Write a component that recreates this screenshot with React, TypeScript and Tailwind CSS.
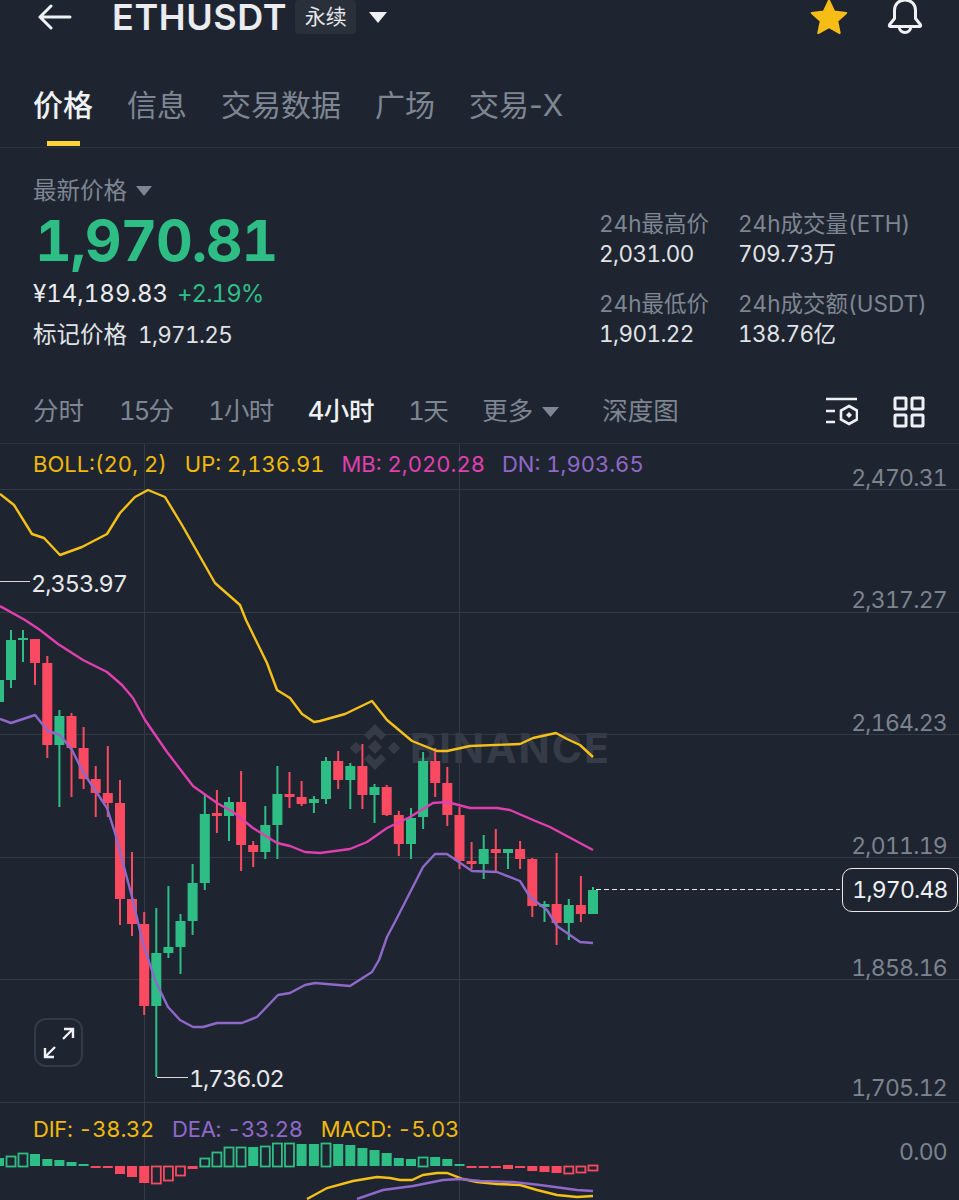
import React from "react";

type C = [number, number, number, number, number, number];
// x, wickTop, bodyTop, bodyBottom, wickBottom, up(1)/down(0)
const candles: C[] = [
  [-1,630,680,702,705,1],[11,630,640,680,688,1],[23,630,638,640,662,1],[35,639,639,663,685,0],[47.3,656,663,745,758,0],
  [59.4,710,716,745,807,1],[71.5,713,716,748,797,0],[83.6,727,748,779,789,0],[95.7,766,779,793,817,0],[107.8,746,793,803,817,0],
  [120,780,803,899,925,0],[132,852,899,924,936,0],[144.2,912,924,1006,1015,0],[156.3,908,953,1006,1077,1],[168.4,886,947,953,958,1],
  [180.5,914,921,947,974,1],[192.6,864,883,921,935,1],[204.8,795,814,883,890,1],[216.9,790,813,816,833,0],[229,797,802,816,841,1],
  [241.1,771,802,845,871,0],[253.2,841,845,852,867,0],[265.3,806,825,852,859,1],[277.4,766,794,825,859,1],[289.5,772,794,797,808,0],
  [301.6,781,797,804,806,0],[313.9,796,799,803,813,1],[326,757,761,799,804,1],[338.2,751,761,780,789,0],[350.3,763,766,780,809,1],
  [362.4,744,766,795,809,0],[374.5,784,787,795,823,1],[386.7,785,787,815,816,0],[398.8,811,815,844,856,0],[411,808,818,844,859,1],
  [423.1,752,761,817,829,1],[435.2,748,761,783,797,0],[447.3,767,783,815,826,0],[459.5,807,815,861,869,0],[471.6,842,861,864,869,0],
  [483.7,835,849,864,879,1],[495.8,829,849,853,871,0],[508,849,849,853,869,1],[520.1,841,849,859,869,0],[532.3,858,859,906,917,0],
  [544.5,901,904,907,922,1],[556.6,853,904,923,945,0],[568.8,899,905,923,940,1],[580.9,876,905,914,922,0],[593,887,890,914,914,1],
];

// x, top, bottom, hollow, up
const bars: [number, number, number, number, number][] = [
  [-1,1158,1166,0,1],[11,1156,1166,1,1],[23,1153,1166,1,1],[35,1154,1166,0,1],[47.3,1159,1166,0,1],[59.4,1160,1166,0,1],[71.5,1162,1166,0,1],[83.6,1164,1166,0,1],
  [95.7,1166,1168,0,0],[107.8,1166,1168,0,0],[120,1166,1174,0,0],[132,1166,1177,0,0],[144.2,1166,1183,0,0],[156.3,1166,1183,1,0],[168.4,1166,1180,1,0],[180.5,1166,1175,1,0],[192.6,1166,1169,0,0],
  [204.8,1158,1166,1,1],[216.9,1152,1166,1,1],[229,1147,1166,1,1],[241.1,1147,1166,1,1],[253.2,1147,1166,0,1],[265.3,1146,1166,1,1],[277.4,1143,1166,1,1],[289.5,1143,1166,1,1],[301.6,1144,1166,0,1],
  [313.9,1144,1166,0,1],[326,1143,1166,1,1],[338.2,1144,1166,0,1],[350.3,1145,1166,0,1],[362.4,1148,1166,0,1],[374.5,1150,1166,0,1],[386.7,1153,1166,0,1],[398.8,1158,1166,0,1],[411,1159,1166,0,1],[423.1,1157,1166,1,1],[435.2,1157,1166,0,1],[447.3,1159,1166,0,1],[459.5,1164,1166,0,1],
  [471.6,1166,1168,0,0],[483.7,1166,1168,0,0],[495.8,1166,1168,0,0],[508,1165,1169,0,0],[520.1,1166,1168,0,0],[532.3,1166,1171,0,0],[544.5,1166,1172,0,0],[556.6,1166,1173,0,0],[568.8,1166,1173,1,0],[580.9,1166,1172,1,0],[593,1165,1170,1,0],
];

const bollUp = "0,494 14,505 32,534 44,538 60,555 82,547 107,534 120,513 135,497 148,490 165,497 182,525 215,583 240,605 246,620 267,663 277,690 290,698 302,714 314,722 320,721 345,714 372,701 387,720 412,741 437,751 447,751 470,746 520,744 533,738 556,733 567,739 580,745 593,757";
const bollMid = "0,606 25,620 40,630 58,644 83,660 107,672 122,685 133,698 145,720 167,752 193,786 217,803 233,812 253,828 277,843 290,846 305,852 320,853 350,849 367,842 387,828 410,817 433,803 447,802 470,808 497,808 510,810 533,820 550,827 593,850";
const bollLow = "0,719 11,723 35,715 48,731 60,735 72,750 83,772 107,808 115,833 132,897 143,943 155,980 168,1007 180,1020 193,1027 203,1027 217,1023 242,1023 257,1017 278,995 290,993 305,985 315,983 350,986 372,972 379,960 387,937 397,918 423,867 435,854 447,854 472,871 497,872 520,881 530,897 547,910 557,926 580,942 593,943";
const dif = "307,1199 327,1188 353,1181 377,1177 390,1178 400,1180 412,1180 423,1175 437,1173 447,1173 463,1179 477,1182 497,1184 520,1185 537,1190 557,1195 577,1197 593,1196";
const dea = "357,1199 383,1190 413,1186 443,1180 460,1179 480,1181 513,1182 540,1185 577,1190 593,1191";

const RED = "#f94a62";
const GREEN = "#2ebd85";

function Chart() {
  return (
    <svg width="959" height="756" viewBox="0 444 959 756" className="block relative">
      {[489, 612, 734, 857, 979, 1102].map((y) => (
        <line key={y} x1="0" x2="959" y1={y + 0.5} y2={y + 0.5} stroke="#343a45" />
      ))}
      {[144, 459].map((x) => (
        <line key={x} x1={x + 0.5} x2={x + 0.5} y1="443" y2="1200" stroke="#343a45" />
      ))}
      {/* watermark logo */}
      <g fill="#363c47">
        <path d="M375 724l11 11-5 5-6-6-6 6-5-5z" />
        <path d="M375 770l-11-11 5-5 6 6 6-6 5 5z" />
        <rect x="351.5" y="743.5" width="9" height="9" transform="rotate(45 356 748)" />
        <rect x="389.5" y="743.5" width="9" height="9" transform="rotate(45 394 748)" />
        <rect x="370" y="742" width="10" height="10" transform="rotate(45 375 747)" />
      </g>
      {candles.map(([x, wt, bt, bb, wb, up], i) => {
        const c = up ? GREEN : RED;
        return (
          <g key={i} fill={c}>
            <rect x={x - 1} y={wt} width="2" height={wb - wt} />
            <rect x={x - 5} y={bt} width="10" height={Math.max(bb - bt, 2)} />
          </g>
        );
      })}
      <polyline points={bollUp} fill="none" stroke="#f5c018" strokeWidth="2.4" strokeLinejoin="round" />
      <polyline points={bollMid} fill="none" stroke="#e03fb0" strokeWidth="2.4" strokeLinejoin="round" />
      <polyline points={bollLow} fill="none" stroke="#8f69c9" strokeWidth="2.4" strokeLinejoin="round" />
      <line x1="0" x2="30" y1="581.5" y2="581.5" stroke="#d5d8dd" />
      <polyline points="157,1077.5 188,1077.5" fill="none" stroke="#d5d8dd" />
      <line x1="596" x2="840" y1="889.5" y2="889.5" stroke="#e6e8ea" strokeDasharray="5 3" />
      {bars.map(([x, t, b, h, up], i) => {
        const c = up ? GREEN : RED;
        return h ? (
          <rect key={i} x={x - 4.5} y={t + 0.5} width="9" height={b - t} fill="none" stroke={c} strokeWidth="1.8" />
        ) : (
          <rect key={i} x={x - 5} y={t} width="10" height={b - t} fill={c} />
        );
      })}
      <polyline points={dif} fill="none" stroke="#f5c018" strokeWidth="2.4" />
      <polyline points={dea} fill="none" stroke="#8f69c9" strokeWidth="2.4" />
    </svg>
  );
}

function Axis({ y, children }: { y: string; children: React.ReactNode }) {
  return (
    <div className={`absolute right-[12px] leading-[28px] text-[23px] tracking-[-0.75px] text-[#7c838f] ${y}`}>{children}</div>
  );
}

export default function App() {
  const font = "font-['Inter','Noto_Sans_CJK_SC',sans-serif]";
  return (
    <div className={`w-[959px] h-[1200px] overflow-hidden flex flex-col bg-[#1f2530] tabular-nums ${font}`}>
      {/* header */}
      <div className="h-[34px] flex items-center pl-[38px] pr-[36px] shrink-0">
        <svg width="34" height="26" viewBox="0 0 34 26" fill="none" stroke="#eef0f3" strokeWidth="3" strokeLinecap="round" strokeLinejoin="round">
          <path d="M32 13H2M13 2L2 13l11 11" />
        </svg>
        <span className="ml-[40px] text-[36px] leading-[34px] font-semibold text-[#eaecef] tracking-[0.6px]">ETHUSDT</span>
        <span className="ml-[8px] h-[34px] w-[61px] flex items-center justify-center rounded-[4px] bg-[#2a303a] text-[21px] text-[#e5e7ea]">永续</span>
        <svg className="ml-[12px]" width="20" height="13" viewBox="0 0 20 13" fill="#eef0f3"><path d="M1 1h18l-9 11z" /></svg>
        <svg className="ml-auto" width="38" height="36" viewBox="0 0 38 36" fill="#f6bd16" stroke="#f6bd16" strokeWidth="2" strokeLinejoin="round">
          <path d="M19 1.500l5.200 11 12 1.400-8.900 8.200 2.400 11.900L19 28.100 8.300 34l2.400-11.900L1.800 13.900l12-1.400z" />
        </svg>
        <svg className="ml-[39px]" width="36" height="36" viewBox="0 0 36 36" fill="none" stroke="#eef0f3" strokeWidth="3" strokeLinejoin="round" strokeLinecap="round">
          <path d="M18 1c-6.500 0-10.500 4.500-10.500 10.500v8L2.500 25.800c-.4.800 0 1.700 1 1.700h29c1 0 1.400-.9 1-1.700l-5-6.300v-8C28.500 5.500 24.500 1 18 1z" />
          <path d="M12 28c.8 3.500 3 5.500 6 5.500s5.200-2 6-5.500" />
        </svg>
      </div>

      {/* tabs */}
      <div className="h-[114px] shrink-0 flex items-start gap-[34px] pl-[33px] border-b border-[#2d333e] text-[30px] leading-[40px] text-[#7e8693]">
        <div className="pt-[51px] flex flex-col items-center text-[#eef0f3] font-medium">
          价格
          <div className="mt-[16px] w-[33px] h-[5px] bg-[#fcd535]" />
        </div>
        <div className="pt-[51px]">信息</div>
        <div className="pt-[51px]">交易数据</div>
        <div className="pt-[51px]">广场</div>
        <div className="pt-[51px] normal-nums">交易-X</div>
      </div>

      {/* summary */}
      <div className="h-[239px] shrink-0 flex">
        <div className="w-[599px] pl-[33px] pt-[28px]">
          <div className="flex items-center h-[30px] text-[23.5px] text-[#7e8693]">
            最新价格
            <svg className="ml-[9px]" width="16" height="10" viewBox="0 0 16 10" fill="#7e8693"><path d="M0 0h16l-8 10z" /></svg>
          </div>
          <div className="mt-[5px] h-[60px] leading-[60px] text-[57px] font-bold text-[#2ebd85] ml-[2px] tracking-[-1.2px]">1,970.81</div>
          <div className="mt-[8px] h-[30px] leading-[30px] text-[24px] flex">
            <span className="text-[#eaecef]">¥14,189.83</span>
            <span className="ml-[9px] text-[#2ebd85] tracking-[-1px]">+2.19%</span>
          </div>
          <div className="mt-[11px] h-[30px] leading-[30px] flex items-center text-[#e0e3e7]">
            <span className="text-[23.5px]">标记价格</span>
            <span className="ml-[11px] text-[22.5px] tracking-[-0.7px]">1,971.25</span>
          </div>
        </div>
        <div className="pt-[61px] text-[22.5px] leading-[30px]">
          <div className="flex">
            <div className="w-[139px]">
              <div className="text-[#7e8693]">24h最高价</div>
              <div className="text-[#e0e3e7] tracking-[-0.6px]">2,031.00</div>
            </div>
            <div>
              <div className="text-[#7e8693]">24h成交量(ETH)</div>
              <div className="text-[#e0e3e7] tracking-[-0.6px]">709.73万</div>
            </div>
          </div>
          <div className="flex mt-[20px]">
            <div className="w-[139px]">
              <div className="text-[#7e8693]">24h最低价</div>
              <div className="text-[#e0e3e7] tracking-[-0.6px]">1,901.22</div>
            </div>
            <div>
              <div className="text-[#7e8693]">24h成交额(USDT)</div>
              <div className="text-[#e0e3e7] tracking-[-0.6px]">138.76亿</div>
            </div>
          </div>
        </div>
      </div>

      {/* intervals */}
      <div className="h-[57px] shrink-0 flex items-center pl-[33px] pr-[34px] pb-[7px] border-b border-[#2d333e] text-[25.5px] text-[#7e8693]">
        <span>分时</span>
        <span className="ml-[35px] tracking-[-1.8px]">15分</span>
        <span className="ml-[36px] tracking-[-0.7px]">1小时</span>
        <span className="ml-[34px] text-[#eef0f3] font-medium tracking-[-0.3px]">4小时</span>
        <span className="ml-[34px] tracking-[-1.5px]">1天</span>
        <span className="ml-[35px]">更多</span>
        <svg className="ml-[9px]" width="17" height="10" viewBox="0 0 17 10" fill="#7e8693"><path d="M0 0h17l-8.500 10z" /></svg>
        <span className="ml-[43px]">深度图</span>
        <svg className="ml-auto" width="32" height="30" viewBox="0 0 32 30" fill="none" stroke="#eef0f3" strokeWidth="2.600">
          <path d="M0 2h31M0 14h9M0 25h9" />
          <path d="M23 9l8 4.500v9L23 27l-8-4.500v-9z" />
          <path d="M23 15l3 3-3 3-3-3z" fill="#eef0f3" stroke="none" />
        </svg>
        <svg className="ml-[35px]" width="32" height="32" viewBox="0 0 32 32" fill="none" stroke="#eef0f3" strokeWidth="3" strokeLinejoin="round">
          <rect x="2" y="2" width="11" height="11" rx="1" />
          <rect x="19" y="2" width="11" height="11" rx="1" />
          <rect x="2" y="19" width="11" height="11" rx="1" />
          <rect x="19" y="19" width="11" height="11" rx="1" />
        </svg>
      </div>

      {/* chart */}
      <div className="relative flex-1">
        <div className="absolute left-[410px] top-[281px] text-[41px] leading-[46px] font-bold tracking-[2px] text-[#363c47]">BINANCE</div>
        <Chart />
        <div className="absolute left-[33px] top-[6px] leading-[28px] text-[22px] flex">
          <span className="text-[#f0b90b]">BOLL:(20, 2)</span>
          <span className="ml-[18px] text-[#f0b90b]">UP: 2,136.91</span>
          <span className="ml-[17px] text-[#e03fb0]">MB: 2,020.28</span>
          <span className="ml-[17px] text-[#8f69c9]">DN: 1,903.65</span>
        </div>
        <div className="absolute left-[33px] top-[671px] leading-[28px] text-[22px] tracking-[-0.25px] flex">
          <span className="text-[#f0b90b]">DIF: -38.32</span>
          <span className="ml-[18px] text-[#8f69c9]">DEA: -33.28</span>
          <span className="ml-[18px] text-[#f0b90b]">MACD: -5.03</span>
        </div>
        <Axis y="top-[20px]">2,470.31</Axis>
        <Axis y="top-[142px]">2,317.27</Axis>
        <Axis y="top-[265px]">2,164.23</Axis>
        <Axis y="top-[388px]">2,011.19</Axis>
        <Axis y="top-[510px]">1,858.16</Axis>
        <Axis y="top-[630px]">1,705.12</Axis>
        <Axis y="top-[694px]">0.00</Axis>
        <div className="absolute left-[31px] top-[126px] text-[23.5px] leading-[28px] tracking-[-1px] text-[#e6e8ea]">2,353.97</div>
        <div className="absolute left-[189px] top-[621px] text-[23.5px] leading-[28px] tracking-[-1.2px] text-[#e6e8ea]">1,736.02</div>
        <div className="absolute left-[842px] top-[424px] w-[116px] h-[44px] rounded-[10px] border border-[#e6e8ea] bg-[#1f2530] flex items-center justify-center text-[23px] tracking-[-0.8px] text-[#eef0f3]">1,970.48</div>
        <div className="absolute left-[34px] top-[574px] w-[49px] h-[49px] rounded-[12px] border-2 border-[#353b46] flex items-center justify-center">
          <svg width="32" height="32" viewBox="0 0 32 32" fill="none" stroke="#eef0f3" strokeWidth="2.400">
            <path d="M20 12L30 2M21 2h9v9" />
            <path d="M12 20L2 30M11 30H2v-9" />
          </svg>
        </div>
      </div>
    </div>
  );
}
